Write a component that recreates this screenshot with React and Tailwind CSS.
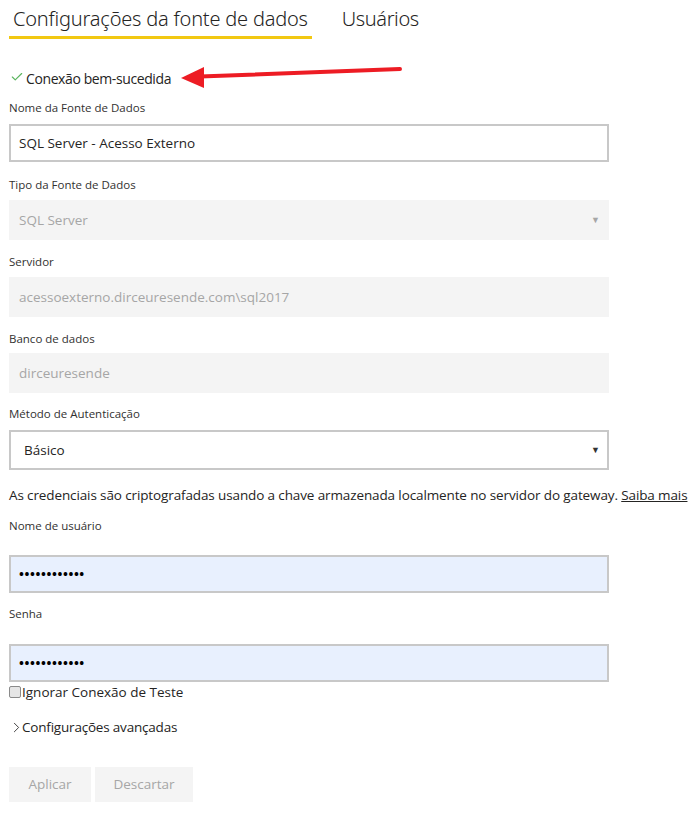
import { FiCheck, FiChevronRight } from "react-icons/fi";

const font = { fontFamily: '"Segoe UI", "Open Sans", "Noto Sans", sans-serif' };
const lightFont = { fontFamily: '"Segoe UI Light", "Noto Sans", "Open Sans", sans-serif' };

function Label({ children, className = "" }) {
  return (
    <div className={`h-4 text-[11.5px] leading-4 text-[#323130] ${className}`}>
      {children}
    </div>
  );
}

function ReadOnlyBox({ children, arrow, className = "" }) {
  return (
    <div
      className={`w-[600px] h-10 bg-[#f4f4f4] flex items-center justify-between pl-[10px] pr-[9px] text-[13.5px] text-[#a6a6a6] ${className}`}
    >
      <span>{children}</span>
      {arrow && <span className="text-[9px] text-[#a6a6a6]">▼</span>}
    </div>
  );
}

function PasswordBox({ className = "" }) {
  return (
    <div
      className={`w-[600px] h-[38px] bg-[#e8f0fe] border-2 border-[#c8c8c8] flex items-center pl-[8px] ${className}`}
    >
      <span className="text-[13px] tracking-[0.6px] text-black font-bold leading-none">
        ••••••••••••
      </span>
    </div>
  );
}

export default function App() {
  return (
    <div className="relative w-[694px] h-[818px] bg-white overflow-hidden" style={font}>
      {/* tabs */}
      <div className="flex items-start pl-[9px] pt-[1px]" style={lightFont}>
        <div className="pt-[3px] pb-[3px] px-[4px] border-b-[3px] border-[#f2c811]">
          <span className="text-[20px] leading-[29px] font-light text-[#252423] tracking-[-0.2px]">
            Configurações da fonte de dados
          </span>
        </div>
        <div className="ml-[30px] pt-[3px]">
          <span className="text-[20px] leading-[29px] font-light text-[#252423] tracking-[-0.4px]">
            Usuários
          </span>
        </div>
      </div>

      {/* form */}
      <div className="flex flex-col pl-[9px] mt-[29px]">
        <div className="flex items-center h-5 text-[14px] text-[#252423]">
          <FiCheck className="text-[#5bb55f] ml-[1px] mr-[2px] -mt-[3px]" size={14} strokeWidth={2} />
          <span className="tracking-[-0.4px]">Conexão bem-sucedida</span>
        </div>

        <Label className="mt-[12px]">Nome da Fonte de Dados</Label>
        <div className="mt-[8px] w-[600px] h-[38px] border-2 border-[#c8c8c8] flex items-center pl-[8px] text-[13.5px] text-[#252423]">
          SQL Server - Acesso Externo
        </div>

        <Label className="mt-[15px]">Tipo da Fonte de Dados</Label>
        <ReadOnlyBox arrow className="mt-[7px]">SQL Server</ReadOnlyBox>

        <Label className="mt-[14px]">Servidor</Label>
        <ReadOnlyBox className="mt-[7px]">acessoexterno.dirceuresende.com\sql2017</ReadOnlyBox>

        <Label className="mt-[14px]">Banco de dados</Label>
        <ReadOnlyBox className="mt-[6px]">dirceuresende</ReadOnlyBox>

        <Label className="mt-[13px]">Método de Autenticação</Label>
        <div className="mt-[8px] w-[600px] h-10 border-2 border-[#c8c8c8] flex items-center justify-between pl-[13px] pr-[7px] text-[13.5px] text-[#252423]">
          <span>Básico</span>
          <span className="text-[9px] text-[#333]">▼</span>
        </div>

        <div className="mt-[15px] h-5 leading-5 text-[13.5px] text-[#252423] whitespace-nowrap tracking-[-0.12px]">
          As credenciais são criptografadas usando a chave armazenada localmente no servidor do gateway.{" "}
          <a className="underline text-[#252423]">Saiba mais</a>
        </div>

        <Label className="mt-[13px]">Nome de usuário</Label>
        <PasswordBox className="mt-[21px]" />

        <Label className="mt-[13px]">Senha</Label>
        <PasswordBox className="mt-[22px]" />

        <div className="mt-[1px] flex items-center h-[18px] text-[13.5px] text-[#252423]">
          <span className="w-[12px] h-[12px] rounded-[2px] border border-[#8a8a8a] bg-[#e6e6e6]" />
          <span className="ml-[1px]">Ignorar Conexão de Teste</span>
        </div>

        <div className="mt-[16px] flex items-center h-5 text-[13.5px] text-[#252423]">
          <FiChevronRight size={17} strokeWidth={1.2} className="-ml-[1px] -mr-[3px]" />
          <span className="tracking-[-0.2px]">Configurações avançadas</span>
        </div>

        <div className="mt-[30px] flex gap-[4px]">
          <button className="w-[82px] h-[35px] bg-[#f4f4f4] text-[13.5px] text-[#a6a6a6]">Aplicar</button>
          <button className="w-[98px] h-[35px] bg-[#f4f4f4] text-[13.5px] text-[#a6a6a6]">Descartar</button>
        </div>
      </div>

      {/* annotation arrow */}
      <svg className="absolute left-0 top-0 pointer-events-none" width="694" height="120">
        <line x1="200" y1="76.5" x2="400" y2="69" stroke="#ed1c24" strokeWidth="4" strokeLinecap="round" />
        <polygon points="181,78 204,67 204,88" fill="#ed1c24" />
      </svg>
    </div>
  );
}
